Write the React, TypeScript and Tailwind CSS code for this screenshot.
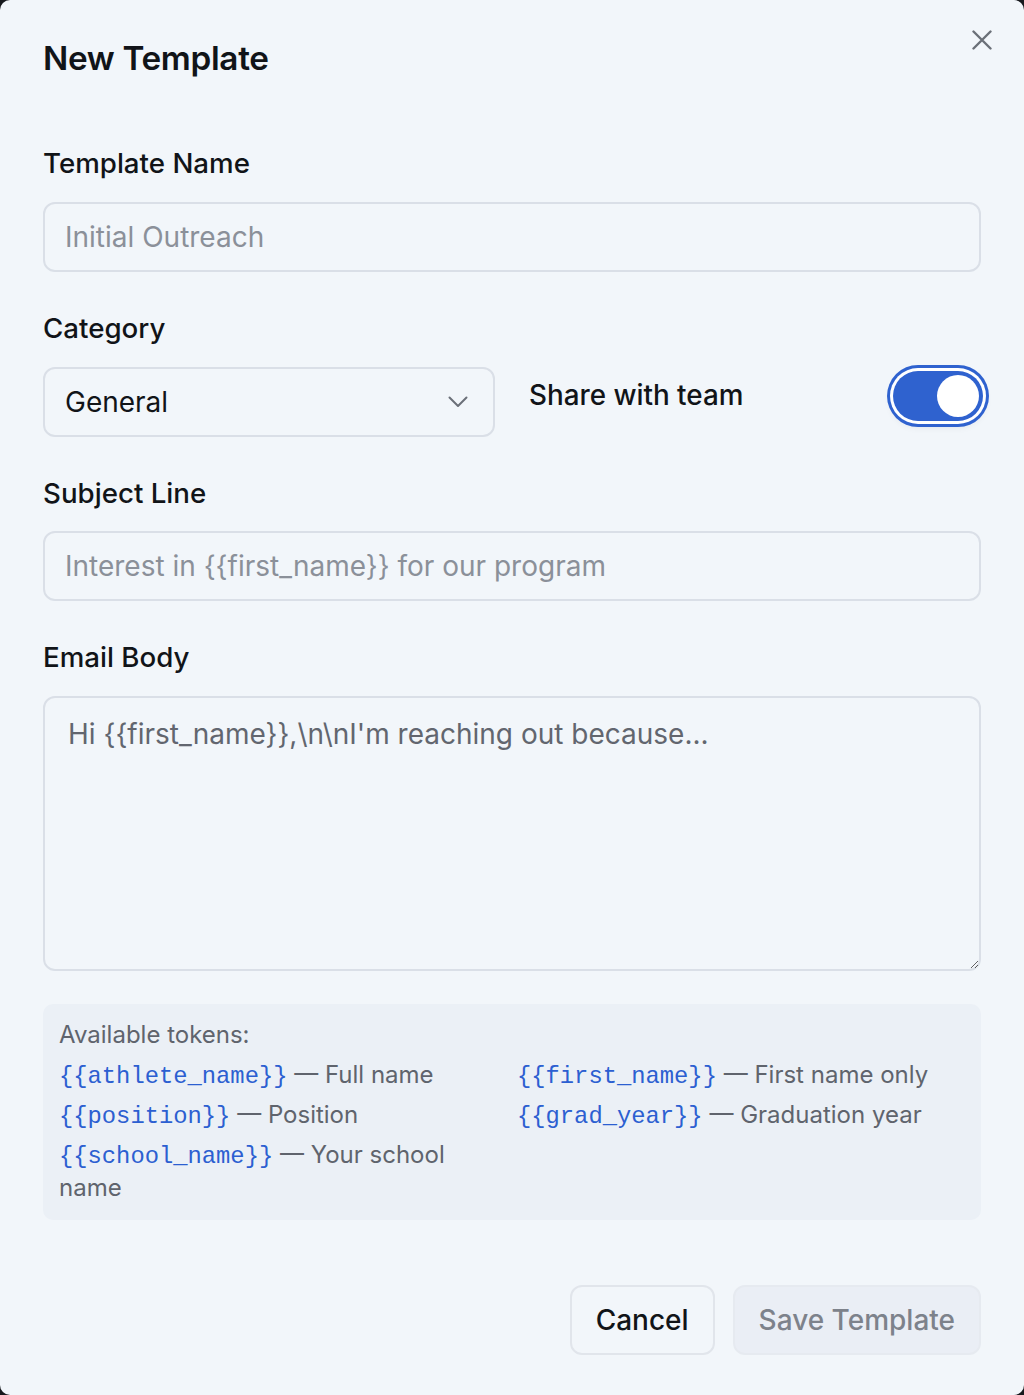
import { useState } from "react";

const inputCls =
  "w-full h-[70px] rounded-[12px] border-2 border-[#dadfe7] bg-transparent px-[20px] text-[28px] text-[#111418] placeholder:text-[#8b9099] outline-none";

const tokens: [string, string][] = [
  ["{{athlete_name}}", "Full name"],
  ["{{first_name}}", "First name only"],
  ["{{position}}", "Position"],
  ["{{grad_year}}", "Graduation year"],
  ["{{school_name}}", "Your school name"],
];

export default function App() {
  const [shared, setShared] = useState(true);

  return (
    <div className="min-h-[1395px] bg-[#17191d] font-['Inter','Liberation_Sans',sans-serif]">
      <div className="relative h-[1395px] rounded-[10px] bg-[#f2f6fa] px-[43px] pt-[38px]">
        <button className="absolute right-[32px] top-[30px] text-[#6b7078]" aria-label="Close">
          <svg width="20" height="20" viewBox="0 0 20 20" fill="none" stroke="currentColor" strokeWidth="2.4" strokeLinecap="round">
            <path d="M1.5 1.5 18.5 18.5M18.5 1.5 1.5 18.5" />
          </svg>
        </button>

        <h2 className="text-[33.3px] leading-[40px] font-semibold tracking-[-0.01em] text-[#111418]">New Template</h2>

        <Label className="mt-[67px]">Template Name</Label>
        <input className={inputCls + " mt-[21px]"} placeholder="Initial Outreach" />

        <Label className="mt-[38px]">Category</Label>
        <div className="mt-[21px] grid grid-cols-2 gap-[34px]">
          <div className="relative">
            <select className={inputCls + " appearance-none"} defaultValue="General">
              <option>General</option>
              <option>Follow-up</option>
              <option>Camp Invite</option>
            </select>
            <svg className="pointer-events-none absolute right-[27px] top-[29px]" width="20" height="12" viewBox="0 0 20 12" fill="none" stroke="#6b7078" strokeWidth="2" strokeLinecap="round" strokeLinejoin="round">
              <path d="M1.5 1.5 10 10l8.5-8.5" />
            </svg>
          </div>
          <div className="flex h-[58px] items-center justify-between">
            <span className="text-[27.8px] font-medium text-[#111418]">Share with team</span>
            <button
              onClick={() => setShared(!shared)}
              className={
                "mr-[-2px] flex h-[50px] w-[90px] items-center rounded-full p-[4px] ring-[3px] ring-[#2f62cf] ring-offset-[3px] ring-offset-white shadow-[0_4px_10px_rgba(15,23,42,0.12)] " +
                (shared ? "justify-end bg-[#2f62cf]" : "justify-start bg-[#cbd2dc]")
              }
            >
              <span className="block h-[42px] w-[42px] rounded-full bg-white" />
            </button>
          </div>
        </div>

        <Label className="mt-[38px]">Subject Line</Label>
        <input className={inputCls + " mt-[20px]"} placeholder="Interest in {{first_name}} for our program" />

        <Label className="mt-[38px]">Email Body</Label>
        <textarea
          className="mt-[21px] block h-[275px] w-full rounded-[12px] border-2 border-[#dadfe7] bg-transparent px-[23px] py-[16px] text-[28px] leading-[40px] text-[#111418] placeholder:text-[#62666f] outline-none"
          placeholder="Hi {{first_name}},\n\nI'm reaching out because..."
        />

        <div className="mt-[33px] rounded-[10px] bg-[#ebf0f6] px-[16px] pt-[14px] pb-[16px] text-[24px] leading-[33px] text-[#5f646d]">
          <div>Available tokens:</div>
          <div className="mt-[7px] grid grid-cols-2 gap-x-[10px] gap-y-[7px]">
            {tokens.map(([t, d]) => (
              <div key={t}>
                <code className="font-['Liberation_Mono','DejaVu_Sans_Mono',monospace] text-[23.8px] leading-none text-[#2c5fd1]">{t}</code> — {d}
              </div>
            ))}
          </div>
        </div>

        <div className="mt-[65px] flex justify-end gap-[18px]">
          <button className="h-[70px] rounded-[12px] border-2 border-[#e1e5eb] px-[24px] text-[28px] font-medium text-[#111418]">
            Cancel
          </button>
          <button disabled className="h-[70px] rounded-[12px] border-2 border-[#e6eaf0] bg-[#eaeef5] px-[24px] text-[28px] font-medium text-[#7d828b]">
            Save Template
          </button>
        </div>
      </div>
    </div>
  );
}

function Label({ children, className }: { children: React.ReactNode; className?: string }) {
  return (
    <label className={"block text-[27.7px] leading-[36px] font-medium text-[#111418] " + (className ?? "")}>
      {children}
    </label>
  );
}
